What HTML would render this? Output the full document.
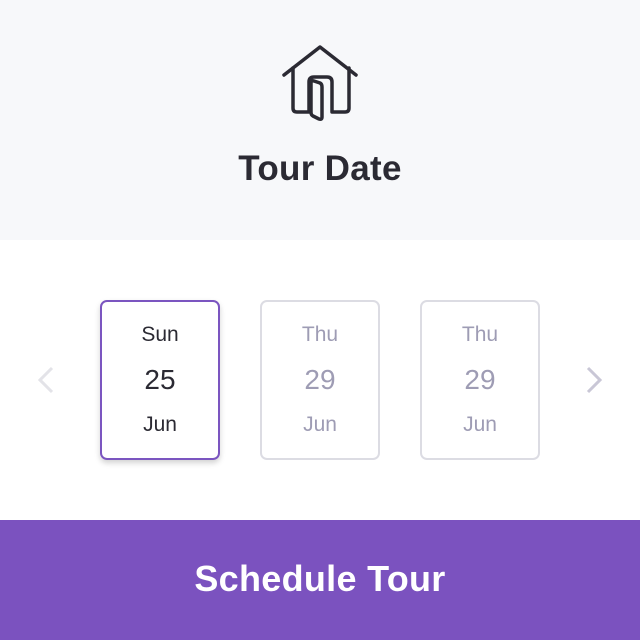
<!DOCTYPE html>
<html><head><style>
body{margin:0;width:640px;height:640px;font-family:"Liberation Sans",sans-serif;overflow:hidden}
.top{height:240px;background:#f7f8fa;position:relative}
.top h1{position:absolute;top:149px;width:100%;text-align:center;margin:0;font-size:35px;letter-spacing:0.3px;font-weight:bold;color:#2b2a33}
.mid{height:280px;background:#fff;position:relative}
.card{position:absolute;top:60px;width:120px;height:160px;border:2px solid #dcdce3;border-radius:7px;box-sizing:border-box;text-align:center;color:#9e9cb4}
.card .a{position:absolute;top:21px;width:100%;font-size:21px}
.card .b{position:absolute;top:62px;width:100%;font-size:28px}
.card .c{position:absolute;top:111px;width:100%;font-size:21px}
.sel{border:2px solid #7b55c0;color:#2b2a33;box-shadow:0 3px 6px rgba(0,0,0,.18)}
.btn{height:120px;background:#7b52bf;color:#fff;text-align:center;font-size:36px;letter-spacing:0.3px;font-weight:bold;line-height:118px}
</style></head><body>
<div class="top">
<svg style="position:absolute;left:270px;top:40px" width="100" height="90" viewBox="270 40 100 90" fill="none" stroke="#2b2a33" stroke-width="3.5" stroke-linejoin="round" stroke-linecap="round">
<path d="M284 75 L320 47 L356 75"/>
<path d="M293 68 V108 Q293 112 297 112 H309 V82 Q309 77 314 77 H327 Q332 77 332 82 V112 H345 Q349 112 349 108 V68"/>
<path d="M311 83 Q311 80 314 81 L320 83 Q322 84 322 87 V117 Q322 120 319 119 L313 116 Q311 115 311 112 Z"/>
</svg>
<h1>Tour Date</h1>
</div>
<div class="mid">
<svg style="position:absolute;left:36px;top:126px" width="20" height="30"><path d="M16 2 L4 14 L16 26" stroke="#e3e3e8" stroke-width="3" fill="none"/></svg>
<div class="card sel" style="left:100px"><div class="a">Sun</div><div class="b">25</div><div class="c">Jun</div></div>
<div class="card" style="left:260px"><div class="a">Thu</div><div class="b">29</div><div class="c">Jun</div></div>
<div class="card" style="left:420px"><div class="a">Thu</div><div class="b">29</div><div class="c">Jun</div></div>
<svg style="position:absolute;left:584px;top:126px" width="20" height="30"><path d="M4 2 L16 14 L4 26" stroke="#c9c7d6" stroke-width="3" fill="none"/></svg>
</div>
<div class="btn">Schedule Tour</div>
</body></html>
